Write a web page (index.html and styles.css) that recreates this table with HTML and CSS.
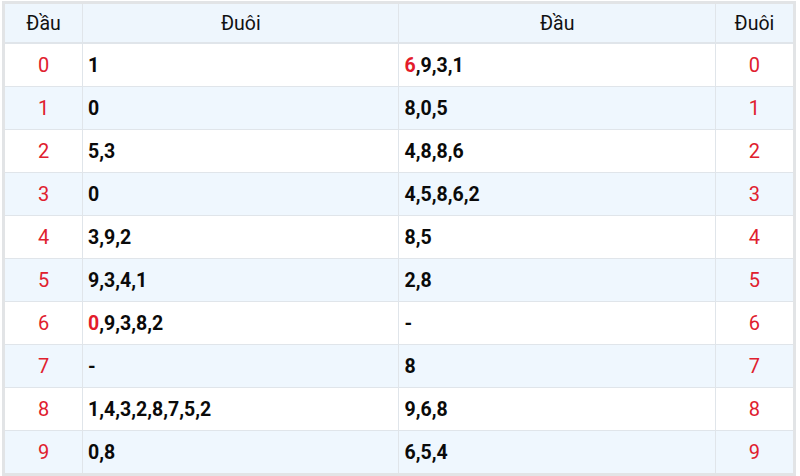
FILE: index.html
```html
<!DOCTYPE html>
<html>
<head>
<meta charset="utf-8">
<link rel="stylesheet" href="styles.css">
</head>
<body>
<div class="wrap">
<table class="lt">
  <colgroup>
    <col class="c-idx"><col class="c-val"><col class="c-val"><col class="c-idx">
  </colgroup>
  <thead>
    <tr><th>Đầu</th><th>Đuôi</th><th>Đầu</th><th>Đuôi</th></tr>
  </thead>
  <tbody>
    <tr><td class="idx">0</td><td class="val">1</td><td class="val"><span class="hl">6</span>,9,3,1</td><td class="idx">0</td></tr>
    <tr><td class="idx">1</td><td class="val">0</td><td class="val">8,0,5</td><td class="idx">1</td></tr>
    <tr><td class="idx">2</td><td class="val">5,3</td><td class="val">4,8,8,6</td><td class="idx">2</td></tr>
    <tr><td class="idx">3</td><td class="val">0</td><td class="val">4,5,8,6,2</td><td class="idx">3</td></tr>
    <tr><td class="idx">4</td><td class="val">3,9,2</td><td class="val">8,5</td><td class="idx">4</td></tr>
    <tr><td class="idx">5</td><td class="val">9,3,4,1</td><td class="val">2,8</td><td class="idx">5</td></tr>
    <tr><td class="idx">6</td><td class="val"><span class="hl">0</span>,9,3,8,2</td><td class="val">-</td><td class="idx">6</td></tr>
    <tr><td class="idx">7</td><td class="val">-</td><td class="val">8</td><td class="idx">7</td></tr>
    <tr><td class="idx">8</td><td class="val">1,4,3,2,8,7,5,2</td><td class="val">9,6,8</td><td class="idx">8</td></tr>
    <tr><td class="idx">9</td><td class="val">0,8</td><td class="val">6,5,4</td><td class="idx">9</td></tr>
  </tbody>
</table>
</div>
</body>
</html>
```
FILE: styles.css
```css
html, body {
  margin: 0;
  padding: 0;
  background: #ffffff;
}
body {
  font-family: Roboto, "Liberation Sans", Arial, sans-serif;
  color: #000;
}
.wrap {
  padding: 1px 4px 0 2px;
}
.lt {
  width: 794px;
  border-collapse: collapse;
  border: 3px solid #e2e4e6;
  table-layout: fixed;
}
.c-idx { width: 79px; }
.c-val { width: 316px; }
.lt th {
  height: 38px;
  padding: 0;
  background: #eef6fd;
  font-weight: 400;
  font-size: 19.5px;
  text-align: center;
  border: 1px solid #e0e5ea;
  border-bottom-width: 2px;
  color: #111;
}
.lt td {
  height: 42px;
  padding: 0 5px;
  border: 1px solid #e0e5ea;
  vertical-align: middle;
}
.lt tbody tr:nth-child(even) td {
  background: #eff7fe;
}
.idx {
  text-align: center;
  color: #e0202e;
  font-size: 20px;
}
.val {
  font-weight: 700;
  font-size: 19.5px;
  color: #0a0a0a;
}
.hl {
  color: #e31b2b;
}
```
